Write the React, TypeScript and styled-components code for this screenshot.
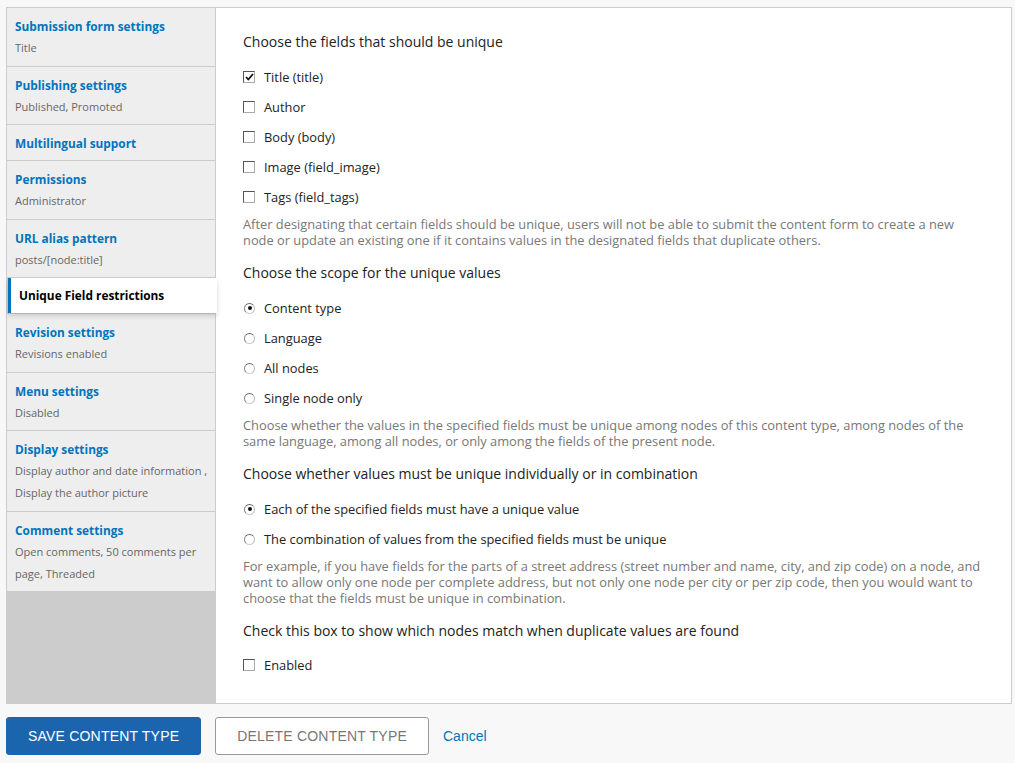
import React from "react";
import styled, { createGlobalStyle } from "styled-components";

const Global = createGlobalStyle`
  html, body { margin: 0; padding: 0; background: #f8f8f8; }
  body { font-family: "Open Sans", "Noto Sans", sans-serif; color: #222; }
  * { box-sizing: border-box; }
`;

const Page = styled.div`
  padding: 7px 3px 0 6px;
`;

const Tabs = styled.div`
  display: flex;
  border: 1px solid #ccc;
  background: #fff;
  height: 697px;
`;

const Menu = styled.ul`
  list-style: none;
  margin: 0;
  padding: 0;
  width: 209px;
  flex: none;
  background: #ccc;
  display: flex;
  flex-direction: column;
`;

const MenuItem = styled.li<{ $active?: boolean }>`
  position: relative;
  background: ${(p) => (p.$active ? "#fff" : "#eee")};
  margin: ${(p) => (p.$active ? "0 -1px 1px 1px" : "0 1px 1px 0")};
  padding: ${(p) => (p.$active ? "9px 5px 10px 8px" : "10px 5px 9px 5px")};
  border-left: 3px solid ${(p) => (p.$active ? "#0074bd" : "transparent")};
  box-shadow: ${(p) => (p.$active ? "0 3px 5px rgba(0,0,0,0.15)" : "none")};
  z-index: ${(p) => (p.$active ? 1 : 0)};
`;

const MenuTitle = styled.a<{ $active?: boolean }>`
  display: block;
  font-size: 11.85px;
  font-weight: 700;
  line-height: 16px;
  color: ${(p) => (p.$active ? "#000" : "#0074bd")};
  text-decoration: none;
  white-space: nowrap;
`;

const MenuSummary = styled.div`
  font-size: 11px;
  line-height: 22px;
  color: #666;
  margin: 3px 0 -2.5px;
`;

const Pane = styled.div`
  flex: 1;
  padding: 24px 27px 0 27px;
  min-width: 0;
`;

const Section = styled.div`
  & + & {
    margin-top: 14px;
  }
`;

const Heading = styled.div<{ $tight?: boolean }>`
  font-size: 14px;
  line-height: 20px;
  color: #222;
  margin-bottom: ${(p) => (p.$tight ? "9px" : "10px")};
`;

const OptionRow = styled.label`
  display: flex;
  align-items: center;
  height: 30px;
  font-size: 12.85px;
  color: #222;
`;

const Box = styled.span`
  width: 12px;
  height: 12px;
  flex: none;
  border: 1px solid;
  border-color: #555 #aaa #aaa #555;
  background: #fff;
  margin-right: 9px;
  display: flex;
  align-items: center;
  justify-content: center;
`;

const Radio = styled.span<{ $checked?: boolean }>`
  width: 11px;
  height: 11px;
  flex: none;
  border-radius: 50%;
  border: 1px solid;
  border-color: #666 #bbb #ccc #888;
  background: #fff;
  margin-left: 1px;
  margin-right: 9px;
  display: flex;
  align-items: center;
  justify-content: center;
  &::after {
    content: "";
    display: ${(p) => (p.$checked ? "block" : "none")};
    width: 4px;
    height: 4px;
    border-radius: 50%;
    background: #111;
  }
`;

const Description = styled.div`
  font-size: 12.85px;
  line-height: 16px;
  color: #777;
  margin-top: 4px;
  padding-bottom: 1px;
`;

const Actions = styled.div`
  display: flex;
  align-items: center;
  gap: 14px;
  margin-top: 13px;
`;

const Button = styled.button<{ $primary?: boolean }>`
  height: 38px;
  padding: 0 21px;
  border-radius: 3px;
  font-family: "Liberation Sans", Arial, sans-serif;
  font-size: 14px;
  letter-spacing: 0.2px;
  text-transform: uppercase;
  cursor: pointer;
  background: ${(p) => (p.$primary ? "#1b65af" : "#fff")};
  color: ${(p) => (p.$primary ? "#fff" : "#777")};
  border: 1px solid ${(p) => (p.$primary ? "#1b65af" : "#999")};
`;

const CancelLink = styled.a`
  font-family: "Liberation Sans", Arial, sans-serif;
  font-size: 14px;
  color: #0074bd;
  text-decoration: none;
`;

const menu = [
  { title: "Submission form settings", summary: ["Title"] },
  { title: "Publishing settings", summary: ["Published, Promoted"] },
  { title: "Multilingual support", summary: [] },
  { title: "Permissions", summary: ["Administrator"] },
  { title: "URL alias pattern", summary: ["posts/[node:title]"] },
  { title: "Unique Field restrictions", summary: [], active: true },
  { title: "Revision settings", summary: ["Revisions enabled"] },
  { title: "Menu settings", summary: ["Disabled"] },
  {
    title: "Display settings",
    summary: ["Display author and date information , Display the author picture"],
  },
  { title: "Comment settings", summary: ["Open comments, 50 comments per page, Threaded"] },
];

const Check = ({ checked }: { checked?: boolean }) => (
  <Box>
    {checked && (
      <svg width="9" height="8" viewBox="0 0 9 8">
        <path d="M1 4 L3.3 6.5 L8 1" stroke="#111" strokeWidth="1.8" fill="none" />
      </svg>
    )}
  </Box>
);

export default function App() {
  return (
    <>
      <Global />
      <Page>
        <Tabs>
          <Menu>
            {menu.map((m) => (
              <MenuItem key={m.title} $active={m.active}>
                <MenuTitle $active={m.active} href="#">
                  {m.title}
                </MenuTitle>
                {m.summary.length > 0 && (
                  <MenuSummary>
                    {m.summary.map((s) => (
                      <div key={s}>{s}</div>
                    ))}
                  </MenuSummary>
                )}
              </MenuItem>
            ))}
          </Menu>
          <Pane>
            <Section>
              <Heading>Choose the fields that should be unique</Heading>
              {[
                ["Title (title)", true],
                ["Author", false],
                ["Body (body)", false],
                ["Image (field_image)", false],
                ["Tags (field_tags)", false],
              ].map(([l, c]) => (
                <OptionRow key={l as string}>
                  <Check checked={c as boolean} />
                  {l}
                </OptionRow>
              ))}
              <Description>
                After designating that certain fields should be unique, users will not be able to submit the
                content form to create a new node or update an existing one if it contains values in the
                designated fields that duplicate others.
              </Description>
            </Section>
            <Section>
              <Heading>Choose the scope for the unique values</Heading>
              {["Content type", "Language", "All nodes", "Single node only"].map((l, i) => (
                <OptionRow key={l}>
                  <Radio $checked={i === 0} />
                  {l}
                </OptionRow>
              ))}
              <Description>
                Choose whether the values in the specified fields must be unique among nodes of this content
                type, among nodes of the same language, among all nodes, or only among the fields of the
                present node.
              </Description>
            </Section>
            <Section>
              <Heading>Choose whether values must be unique individually or in combination</Heading>
              {[
                "Each of the specified fields must have a unique value",
                "The combination of values from the specified fields must be unique",
              ].map((l, i) => (
                <OptionRow key={l}>
                  <Radio $checked={i === 0} />
                  {l}
                </OptionRow>
              ))}
              <Description>
                For example, if you have fields for the parts of a street address (street number and name, city,
                and zip code) on a node, and want to allow only one node per complete address, but not only one
                node per city or per zip code, then you would want to choose that the fields must be unique in
                combination.
              </Description>
            </Section>
            <Section>
              <Heading $tight>Check this box to show which nodes match when duplicate values are found</Heading>
              <OptionRow>
                <Check />
                Enabled
              </OptionRow>
            </Section>
          </Pane>
        </Tabs>
        <Actions>
          <Button $primary>Save content type</Button>
          <Button>Delete content type</Button>
          <CancelLink href="#">Cancel</CancelLink>
        </Actions>
      </Page>
    </>
  );
}
